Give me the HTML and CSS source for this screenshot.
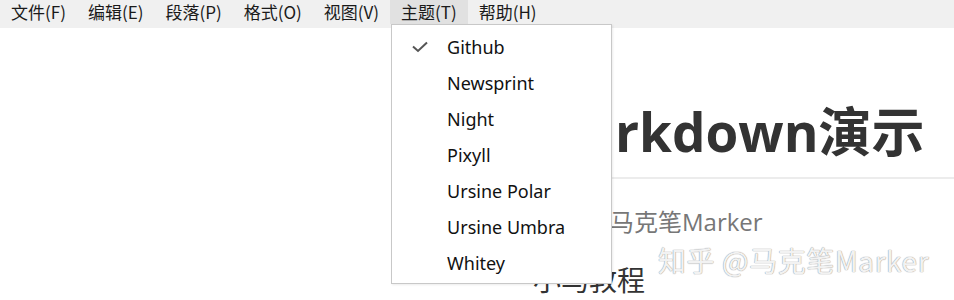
FILE: index.html
```html
<!DOCTYPE html>
<html lang="zh-CN">
  <head>
    <meta charset="UTF-8" />
    <meta name="viewport" content="width=device-width, initial-scale=1.0" />
    <title>Markdown演示</title>
    <link rel="stylesheet" href="styles.css">
  </head>
  <body>
    <div class="menubar">
      <span class="menu">文件(F)</span>
      <span class="menu">编辑(E)</span>
      <span class="menu">段落(P)</span>
      <span class="menu">格式(O)</span>
      <span class="menu">视图(V)</span>
      <span class="menu active">主题(T)
        <ul class="dropdown">
          <li class="checked">
            <svg class="check" width="16" height="12" viewBox="0 0 16 12">
              <polyline points="1,5.5 6,10 15,1.5" fill="none" stroke="#555" stroke-width="2" />
            </svg>
            Github
          </li>
          <li>Newsprint</li>
          <li>Night</li>
          <li>Pixyll</li>
          <li>Ursine Polar</li>
          <li>Ursine Umbra</li>
          <li>Whitey</li>
        </ul>
      </span>
      <span class="menu">帮助(H)</span>
    </div>

    <main class="write">
      <h1>Markdown演示</h1>
      <p class="author">马克笔Marker</p>
      <h2>小马教程</h2>
    </main>

    <div class="watermark">知乎 @马克笔Marker</div>
  </body>
</html>
```

FILE: styles.css
```css
html,
body {
  height: 100%;
}
body {
  margin: 0;
  font-family: "Open Sans", "Noto Sans CJK SC", sans-serif;
  color: #333;
  background: #fff;
}
.menubar {
  display: flex;
  align-items: flex-start;
  height: 28px;
  background-color: #f0f0f0;
  font-family: "Noto Sans CJK SC", sans-serif;
  font-size: 17px;
  color: #1a1a1a;
}
.menu {
  position: relative;
  height: 24px;
  line-height: 24px;
  padding: 0 11px;
}
.menu.active {
  background-color: #e1e1e1;
}
.dropdown {
  position: absolute;
  top: 24px;
  left: 1px;
  width: 219px;
  margin: 0;
  padding: 4px 0 2px;
  list-style: none;
  background: #fff;
  border: 1px solid #c8c8c8;
  box-shadow: 1px 1px 2px rgba(0, 0, 0, 0.08);
  font-family: "Noto Sans", sans-serif;
  font-size: 18px;
  color: #111;
  z-index: 2;
}
.dropdown li {
  position: relative;
  height: 36px;
  line-height: 36px;
  padding-left: 55px;
}
.check {
  position: absolute;
  left: 20px;
  top: 12px;
}
.write {
  margin-left: 533px;
  padding-top: 72px;
  overflow: hidden;
}
.write h1 {
  margin: 0;
  padding-bottom: 13px;
  font-size: 53px;
  font-weight: 700;
  line-height: 1.2;
  white-space: nowrap;
  border-bottom: 2px solid #ececec;
}
.author {
  margin: 24px 0 0;
  padding-left: 77px;
  font-size: 24px;
  color: #777;
}
.write h2 {
  margin: 21px 0 0;
  font-size: 28px;
  font-weight: 400;
}
.watermark {
  position: absolute;
  left: 658px;
  top: 240px;
  font-family: "Noto Sans CJK SC", sans-serif;
  font-size: 28px;
  letter-spacing: 0.6px;
  color: rgba(255, 255, 255, 0.9);
  text-shadow: 0 0 1px #9a9a9a, 0 0 1px #9a9a9a;
}
```
